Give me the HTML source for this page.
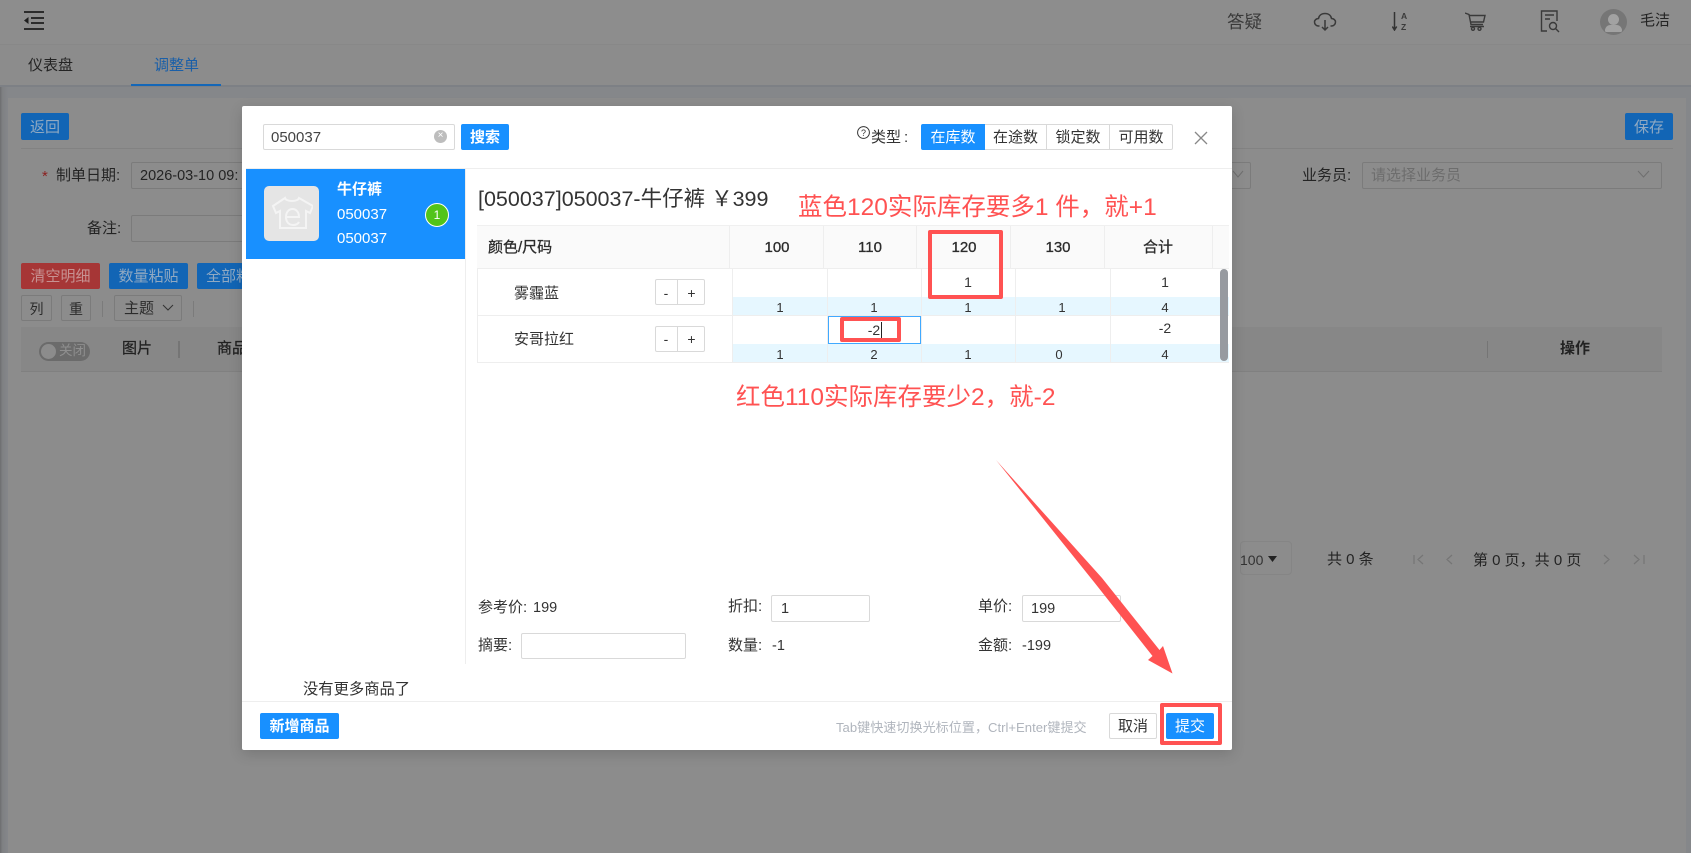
<!DOCTYPE html>
<html lang="zh-CN"><head><meta charset="utf-8"><title>调整单</title>
<style>
html,body{margin:0;padding:0;width:1691px;height:853px;overflow:hidden;background:#85878a}
body{position:relative;font-family:"Liberation Sans","Noto Sans CJK SC",sans-serif;font-size:15px;color:#333}
div{position:absolute;box-sizing:border-box}
.t{white-space:nowrap;line-height:20px;height:20px}
.c{text-align:center}
.b{border:1px solid #7b7b7b;border-radius:2px}
.bg{color:#242424}
.bbtn{background:#1265b5;color:#90a9c2;border-radius:2px;text-align:center;line-height:29px;height:27px}
.pri{background:#1890ff;color:#fff;border-radius:2px;text-align:center;font-weight:bold;line-height:28px;height:26px}
.inp{border:1px solid #d9d9d9;border-radius:2px;background:#fff}
.sep{background:#eee}
.red{border:4px solid #ff5252;border-radius:2px}
.ann{color:#ff5252;font-size:24.500px;line-height:30px;height:30px;white-space:nowrap}
.th{color:#2c2c2c;-webkit-text-stroke:.3px #2c2c2c}
.seg{border:1px solid #d9d9d9;height:26px;line-height:26px;text-align:center;top:124px;background:#fff;color:#333}
</style></head><body>

<!-- background page -->
<div style="left:0;top:0;width:8px;height:853px;background:linear-gradient(90deg,#6c6d6f,#7f8083 30%,#85878a)"></div>
<div style="left:0;top:0;width:1691px;height:44px;background:#8d8d8d"></div>
<div style="left:0;top:44px;width:1691px;height:1px;background:#888"></div>
<div style="left:0;top:45px;width:1691px;height:41px;background:#8c8c8c"></div>
<div style="left:0;top:85px;width:1691px;height:2px;background:#7d8085"></div>
<div style="left:8px;top:98px;width:1678px;height:755px;background:#8c8c8c"></div>

<svg style="position:absolute;left:24px;top:11px" width="20" height="19" viewBox="0 0 20 19"><path d="M0 1h20M7 7h13M7 12h13M0 18h20" stroke="#1f1f1f" stroke-width="1.800" fill="none"/><path d="M4.500 6v7L0 9.500z" fill="#1f1f1f"/></svg>

<div class="t" style="left:1227px;top:12px;font-size:17.500px;color:#3a3a3a">答疑</div>
<svg style="position:absolute;left:1313px;top:12px" width="24" height="20" viewBox="0 0 24 20" fill="none" stroke="#3a3a3a" stroke-width="1.500"><path d="M6.500 14H5.500C3 14 1.500 12 1.500 10 1.500 8 3.500 6.500 5.500 6.500 6 3.500 8.500 1.500 12 1.500s6 2 6.500 5c2 0 4 1.500 4 3.500s-1.500 4-4 4h-1"/><path d="M12 8v10M9 15l3 3 3-3"/></svg>
<svg style="position:absolute;left:1392px;top:11px" width="18" height="20" viewBox="0 0 18 20" fill="none" stroke="#333" stroke-width="1.500"><path d="M2.500 1v18M.3 15.500l2.200 3.500 2.200-3.500"/><text x="9" y="8" font-size="8.500" font-weight="bold" fill="#3a3a3a" stroke="none" font-family="Liberation Sans">A</text><text x="9" y="19" font-size="8.500" font-weight="bold" fill="#3a3a3a" stroke="none" font-family="Liberation Sans">Z</text></svg>
<svg style="position:absolute;left:1465px;top:12px" width="21" height="19" viewBox="0 0 21 19" fill="none" stroke="#3a3a3a" stroke-width="1.400"><path d="M0 1l4 1.500L6 12.500h12M4.500 3.500H20L18.500 10H5.800M5 14.500h14"/><circle cx="8" cy="16.800" r="1.500"/><circle cx="14.500" cy="16.800" r="1.500"/></svg>
<svg style="position:absolute;left:1540px;top:9px" width="21" height="24" viewBox="0 0 21 24" fill="none" stroke="#3a3a3a" stroke-width="1.400"><path d="M7 22H1.500V2H17v10M5 6h9M5 10h5"/><circle cx="13" cy="17" r="3.500"/><path d="M15.500 19.500l3.500 3.500"/></svg>
<div style="left:1600px;top:9px;width:27px;height:26px;border-radius:50%;background:#767676;overflow:hidden">
<div style="left:8px;top:5px;width:11px;height:11px;border-radius:50%;background:#a2a2a2"></div>
<div style="left:5px;top:16px;width:17px;height:7px;border-radius:7px 7px 2px 2px;background:#a2a2a2"></div></div>
<div class="t bg" style="left:1640px;top:11px;font-size:15px">毛洁</div>

<div class="t bg" style="left:28px;top:56px">仪表盘</div>
<div class="t" style="left:154px;top:56px;color:#1a5fa8">调整单</div>
<div style="left:131px;top:84px;width:90px;height:2px;background:#1467b8"></div>

<div class="bbtn" style="left:21px;top:113px;width:48px">返回</div>
<div class="bbtn" style="left:1625px;top:113px;width:48px">保存</div>
<div style="left:21px;top:148px;width:1652px;height:1px;background:#828282"></div>

<div class="t" style="left:42px;top:167px;color:#8b1f1f">*</div>
<div class="t bg" style="left:56px;top:166px">制单日期:</div>
<div class="b" style="left:131px;top:162px;width:200px;height:27px"></div>
<div class="t bg" style="left:140px;top:166px;font-size:14.500px">2026-03-10 09:</div>
<div class="t bg" style="left:87px;top:219px">备注:</div>
<div class="b" style="left:131px;top:215px;width:200px;height:27px"></div>

<div class="b" style="left:1100px;top:162px;width:151px;height:27px"></div>
<svg style="position:absolute;left:1232px;top:170px" width="12" height="9" viewBox="0 0 12 9"><path d="M1 1l5 6 5-6" stroke="#6f6f6f" fill="none"/></svg>
<div class="t bg" style="left:1302px;top:166px">业务员:</div>
<div class="b" style="left:1362px;top:162px;width:300px;height:27px"></div>
<div class="t" style="left:1371px;top:166px;color:#6d6d6d">请选择业务员</div>
<svg style="position:absolute;left:1637px;top:170px" width="13" height="9" viewBox="0 0 13 9"><path d="M1 1l5.500 6L12 1" stroke="#6f6f6f" fill="none"/></svg>

<div style="left:21px;top:263px;width:79px;height:26px;background:#a63636;color:#c79292;border-radius:2px;text-align:center;line-height:28px">清空明细</div>
<div style="left:109px;top:263px;width:79px;height:26px;background:#1265b5;color:#90a9c2;border-radius:2px;text-align:center;line-height:28px">数量粘贴</div>
<div style="left:197px;top:263px;width:79px;height:26px;background:#1265b5;color:#90a9c2;border-radius:2px;padding-left:9px;line-height:28px;white-space:nowrap">全部粘</div>

<div class="b c" style="left:21px;top:295px;width:31px;height:26px;line-height:26px;font-size:14px;color:#2b2b2b">列</div>
<div class="b c" style="left:61px;top:295px;width:30px;height:26px;line-height:26px;font-size:14px;color:#2b2b2b">重</div>
<div style="left:102px;top:301px;width:1px;height:16px;background:#7b7b7b"></div>
<div class="b" style="left:114px;top:295px;width:68px;height:26px;line-height:26px;padding-left:9px;color:#2b2b2b">主题</div>
<svg style="position:absolute;left:162px;top:304px" width="12" height="8" viewBox="0 0 12 8"><path d="M1 1l5 5 5-5" stroke="#333" fill="none"/></svg>
<div style="left:193px;top:301px;width:1px;height:16px;background:#7b7b7b"></div>

<div style="left:21px;top:327px;width:1641px;height:45px;background:#878787;border-bottom:1px solid #808080"></div>
<div style="left:39px;top:342px;width:51px;height:19px;border-radius:10px;background:#6b6b6b"></div>
<div style="left:41px;top:344px;width:15px;height:15px;border-radius:50%;background:#8c8c8c"></div>
<div class="t" style="left:59px;top:341px;color:#8f8f8f;font-size:13.500px">关闭</div>
<div class="t" style="left:122px;top:339px;color:#222;-webkit-text-stroke:.3px #222">图片</div>
<div style="left:178px;top:341px;width:2px;height:17px;background:#757575"></div>
<div class="t" style="left:217px;top:339px;color:#222;-webkit-text-stroke:.3px #222">商品</div>
<div style="left:1487px;top:341px;width:1px;height:17px;background:#757575"></div>
<div class="t" style="left:1560px;top:339px;color:#222;font-weight:bold">操作</div>

<div style="left:1240px;top:541px;width:52px;height:34px;border:1px solid #858585;border-radius:4px"></div>
<div class="t" style="left:1240px;top:550px;font-size:14px;color:#333">100</div>
<svg style="position:absolute;left:1268px;top:556px" width="9" height="6"><path d="M0 0h9L4.500 6z" fill="#222"/></svg>
<div class="t bg" style="left:1327px;top:550px;font-size:15px">共 0 条</div>
<svg style="position:absolute;left:1413px;top:553px" width="235" height="14" fill="none" stroke="#757575" stroke-width="1.200"><path d="M1 2v9M10 2L5 6.500l5 4.500M39 2l-5 4.500 5 4.500M191 2l5 4.500-5 4.500M221 2l5 4.500-5 4.500M231 2v9"/></svg>
<div class="t bg" style="left:1473px;top:551px;font-size:15px">第 0 页，共 0 页</div>

<!-- modal -->
<div style="left:242px;top:106px;width:990px;height:644px;background:#fff;border-radius:2px;box-shadow:0 4px 14px rgba(0,0,0,.15)"></div>
<div class="inp" style="left:263px;top:124px;width:192px;height:26px"></div>
<div class="t" style="left:271px;top:128px;font-size:15px;color:#444">050037</div>
<div style="left:434px;top:130px;width:13px;height:13px;border-radius:50%;background:#bdbdbd;color:#fff;font-size:10px;line-height:12px;text-align:center">×</div>
<div class="pri" style="left:461px;top:124px;width:48px">搜索</div>

<svg style="position:absolute;left:857px;top:126px" width="13" height="13" viewBox="0 0 13 13" fill="none" stroke="#333"><circle cx="6.500" cy="6.500" r="5.900"/><text x="6.500" y="9.800" font-size="9" fill="#333" stroke="none" text-anchor="middle" font-family="Liberation Sans">?</text></svg>
<div class="t" style="left:871px;top:128px">类型<span style="margin-left:3px">:</span></div>
<div class="seg" style="left:921px;width:64px;background:#1890ff;color:#fff;border-color:#1890ff;border-radius:2px 0 0 2px">在库数</div>
<div class="seg" style="left:985px;width:62px;border-left:0">在途数</div>
<div class="seg" style="left:1047px;width:63px;border-left:0">锁定数</div>
<div class="seg" style="left:1110px;width:63px;border-left:0;border-radius:0 2px 2px 0">可用数</div>
<svg style="position:absolute;left:1194px;top:131px" width="14" height="14" fill="none" stroke="#888" stroke-width="1.300"><path d="M1 1l12 12M13 1L1 13"/></svg>

<div class="sep" style="left:246px;top:168px;width:986px;height:1px"></div>
<div style="left:246px;top:169px;width:219px;height:90px;background:#1890ff"></div>
<div style="left:264px;top:186px;width:55px;height:55px;border-radius:5px;background:#e5e5e5"></div>
<svg style="position:absolute;left:271px;top:196px" width="42" height="34" viewBox="0 0 42 34" fill="none" stroke="#f4f4f4" stroke-width="2"><path d="M14 2 2 10l3 7 4-2v17h26V15l4 2 3-7L28 2c-1 4-13 4-14 0z"/><path d="M15 21h13c0-5-3-8-6.500-8S15 16 15 21s3 8 7 8c3 0 5-1 6-3"/></svg>
<div class="t" style="left:337px;top:180px;color:#fff;font-weight:bold;font-size:15px">牛仔裤</div>
<div class="t" style="left:337px;top:205px;color:#fff;font-size:15px">050037</div>
<div class="t" style="left:337px;top:229px;color:#fff;font-size:15px">050037</div>
<div style="left:425px;top:203px;width:24px;height:24px;border-radius:50%;background:#52c41a;border:1px solid #fff;color:#fff;font-size:12px;text-align:center;line-height:22px">1</div>
<div class="sep" style="left:465px;top:169px;width:1px;height:495px"></div>

<div style="left:478px;top:186px;font-size:21.500px;line-height:26px;height:26px;white-space:nowrap;color:#333">[050037]050037-牛仔裤 ￥399</div>
<div class="ann" style="left:798px;top:193px">蓝色120实际库存要多1 件，就+1</div>

<div style="left:477px;top:225px;width:752px;height:44px;background:#fafafa;border-top:1px solid #f0f0f0;border-bottom:1px solid #eee"></div>
<div class="sep" style="left:729px;top:226px;width:1px;height:42px"></div>
<div class="sep" style="left:823px;top:226px;width:1px;height:42px"></div>
<div class="sep" style="left:916px;top:226px;width:1px;height:42px"></div>
<div class="sep" style="left:1010px;top:226px;width:1px;height:42px"></div>
<div class="sep" style="left:1104px;top:226px;width:1px;height:42px"></div>
<div class="sep" style="left:1212px;top:226px;width:1px;height:42px"></div>
<div class="t th" style="left:488px;top:238px">颜色/尺码</div>
<div class="t th c" style="left:747px;top:238px;width:60px">100</div>
<div class="t th c" style="left:840px;top:238px;width:60px">110</div>
<div class="t th c" style="left:934px;top:238px;width:60px">120</div>
<div class="t th c" style="left:1028px;top:238px;width:60px">130</div>
<div class="t th c" style="left:1128px;top:238px;width:60px">合计</div>

<div style="left:732px;top:297px;width:497px;height:18px;background:#e6f7ff"></div>
<div style="left:732px;top:344px;width:497px;height:18px;background:#e6f7ff"></div>
<div class="sep" style="left:477px;top:315px;width:752px;height:1px"></div>
<div class="sep" style="left:477px;top:362px;width:752px;height:1px"></div>
<div class="sep" style="left:477px;top:268px;width:1px;height:94px"></div>
<div class="sep" style="left:732px;top:268px;width:1px;height:94px"></div>
<div class="sep" style="left:827px;top:268px;width:1px;height:94px"></div>
<div class="sep" style="left:921px;top:268px;width:1px;height:94px"></div>
<div class="sep" style="left:1015px;top:268px;width:1px;height:94px"></div>
<div class="sep" style="left:1110px;top:268px;width:1px;height:94px"></div>
<div style="left:1220px;top:269px;width:8px;height:92px;border-radius:4px;background:#979aa0"></div>

<div class="t" style="left:514px;top:284px">雾霾蓝</div>
<div class="t" style="left:514px;top:330px">安哥拉红</div>
<div class="inp c" style="left:655px;top:279px;width:50px;height:26px"></div>
<div class="sep" style="left:677px;top:279px;width:1px;height:26px;background:#d9d9d9"></div>
<div class="t c" style="left:655px;top:283px;width:22px;font-size:14px">-</div>
<div class="t c" style="left:678px;top:283px;width:27px;font-size:14px">+</div>
<div class="inp c" style="left:655px;top:326px;width:50px;height:26px"></div>
<div class="sep" style="left:677px;top:326px;width:1px;height:26px;background:#d9d9d9"></div>
<div class="t c" style="left:655px;top:329px;width:22px;font-size:14px">-</div>
<div class="t c" style="left:678px;top:329px;width:27px;font-size:14px">+</div>

<div class="t c" style="left:948px;top:272px;width:40px;font-size:14px">1</div>
<div class="t c" style="left:1145px;top:272px;width:40px;font-size:14px">1</div>
<div class="t c" style="left:1145px;top:318px;width:40px;font-size:14px">-2</div>
<div class="t c" style="left:760px;top:298px;width:40px;font-size:13px">1</div>
<div class="t c" style="left:854px;top:298px;width:40px;font-size:13px">1</div>
<div class="t c" style="left:948px;top:298px;width:40px;font-size:13px">1</div>
<div class="t c" style="left:1042px;top:298px;width:40px;font-size:13px">1</div>
<div class="t c" style="left:1145px;top:298px;width:40px;font-size:13px">4</div>
<div class="t c" style="left:760px;top:345px;width:40px;font-size:13px">1</div>
<div class="t c" style="left:854px;top:345px;width:40px;font-size:13px">2</div>
<div class="t c" style="left:948px;top:345px;width:40px;font-size:13px">1</div>
<div class="t c" style="left:1039px;top:345px;width:40px;font-size:13px">0</div>
<div class="t c" style="left:1145px;top:345px;width:40px;font-size:13px">4</div>

<div style="left:828px;top:316px;width:93px;height:28px;border:1px solid #40a9ff;background:#fff"></div>
<div class="t c" style="left:854px;top:320px;width:40px;font-size:14px">-2</div>
<div style="left:881px;top:322px;width:1px;height:16px;background:#222"></div>
<div class="red" style="left:928px;top:230px;width:75px;height:69px"></div>
<div class="red" style="left:840px;top:317px;width:61px;height:25px"></div>
<div class="ann" style="left:736px;top:383px">红色110实际库存要少2，就-2</div>

<div class="t" style="left:478px;top:598px;font-size:15px">参考价:</div>
<div class="t" style="left:533px;top:598px;font-size:14.500px">199</div>
<div class="t" style="left:478px;top:636px;font-size:15px">摘要:</div>
<div class="inp" style="left:521px;top:633px;width:165px;height:26px"></div>
<div class="t" style="left:728px;top:597px;font-size:15px">折扣:</div>
<div class="inp" style="left:771px;top:595px;width:99px;height:27px"></div>
<div class="t" style="left:781px;top:599px;font-size:14.500px">1</div>
<div class="t" style="left:978px;top:597px;font-size:15px">单价:</div>
<div class="inp" style="left:1022px;top:595px;width:99px;height:27px"></div>
<div class="t" style="left:1031px;top:599px;font-size:14.500px">199</div>
<div class="t" style="left:728px;top:636px;font-size:15px">数量:</div>
<div class="t" style="left:772px;top:636px;font-size:14.500px">-1</div>
<div class="t" style="left:978px;top:636px;font-size:15px">金额:</div>
<div class="t" style="left:1022px;top:636px;font-size:14.500px">-199</div>

<svg style="position:absolute;left:0;top:0;z-index:5" width="1691" height="853"><polygon points="996,460 1102,578 1159.500,650 1163,646 1172.500,673.500 1148,660 1152.500,656 1094,582" fill="#ff5252"/></svg>

<div class="t" style="left:303px;top:680px;font-size:15.300px">没有更多商品了</div>
<div class="sep" style="left:242px;top:701px;width:990px;height:1px"></div>
<div class="pri" style="left:260px;top:713px;width:79px">新增商品</div>
<div class="t" style="left:836px;top:718px;font-size:13.100px;color:#b0b5bd">Tab键快速切换光标位置，Ctrl+Enter键提交</div>
<div class="inp c" style="left:1109px;top:713px;width:48px;height:26px;line-height:26px;color:#333">取消</div>
<div class="pri" style="left:1166px;top:713px;width:48px;font-weight:normal">提交</div>
<div class="red" style="left:1160px;top:703px;width:62px;height:42px"></div>

</body></html>
